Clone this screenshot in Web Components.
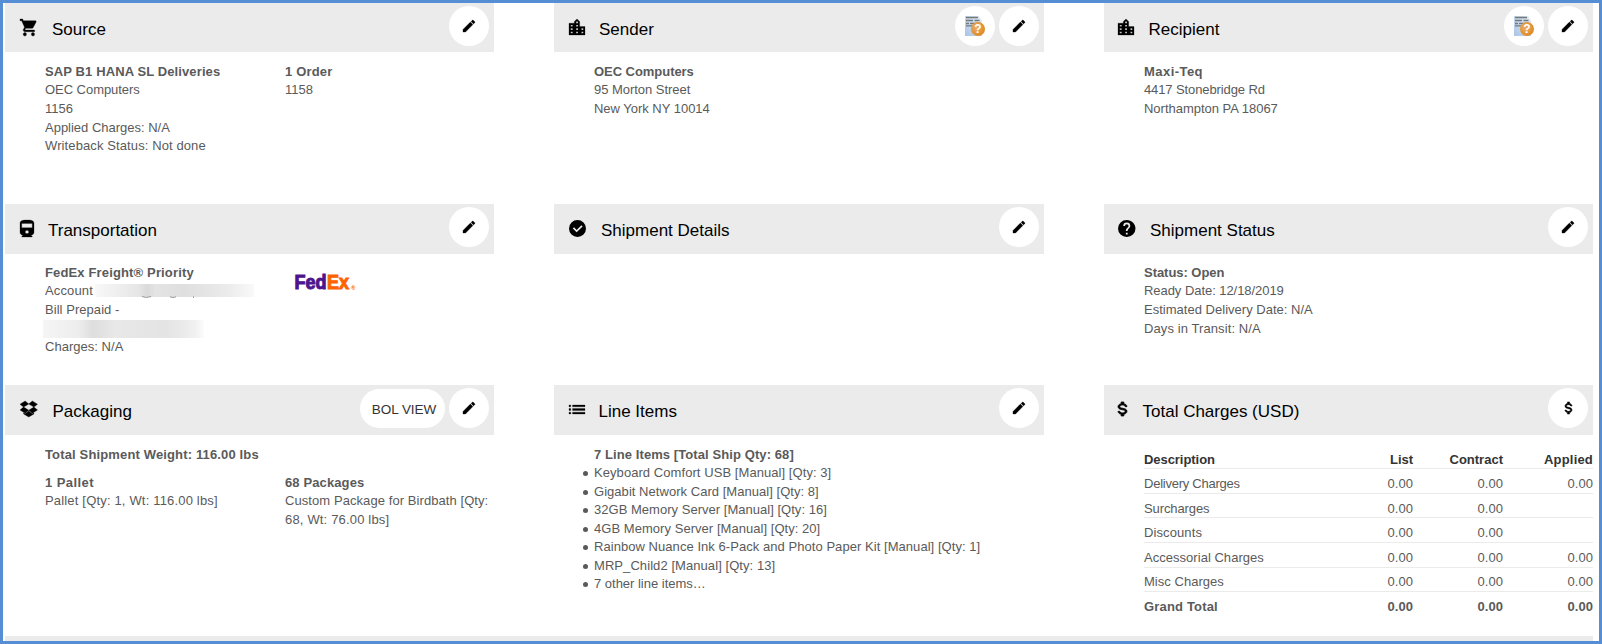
<!DOCTYPE html>
<html lang="en">
<head>
<meta charset="utf-8">
<title>Shipment</title>
<style>
html,body{margin:0;height:100%}
body{font:13px/18.571px "Liberation Sans",Arial,sans-serif;color:#5a5a5a;background:#fff}
</style>
</head>
<body>
<shipment-board>
  <info-card icon="cart" heading="Source" style="--h:49px;--title:47px">
    <round-button slot="actions" icon="pencil"></round-button>
    <two-col>
      <div><text-line bold w="176.5">SAP B1 HANA SL Deliveries</text-line><text-line w="96">OEC Computers</text-line><text-line w="28">1156</text-line><text-line w="126">Applied Charges: N/A</text-line><text-line w="162">Writeback Status: Not done</text-line></div>
      <div><text-line bold w="47.5">1 Order</text-line><text-line w="28">1158</text-line></div>
    </two-col>
  </info-card>
  <info-card icon="city" heading="Sender" style="--h:49px;--title:45px">
    <round-button slot="actions" icon="ask"></round-button>
    <round-button slot="actions" icon="pencil"></round-button>
    <text-line bold w="101">OEC Computers</text-line><text-line w="97.5">95 Morton Street</text-line><text-line w="117">New York NY 10014</text-line>
  </info-card>
  <info-card icon="city" heading="Recipient" style="--h:49px;--title:44.5px;--ix:14px">
    <round-button slot="actions" icon="ask"></round-button>
    <round-button slot="actions" icon="pencil"></round-button>
    <text-line bold w="59">Maxi-Teq</text-line><text-line w="122">4417 Stonebridge Rd</text-line><text-line w="135">Northampton PA 18067</text-line>
  </info-card>

  <info-card icon="train" heading="Transportation" style="--title:43px;--pt:9.9px">
    <round-button slot="actions" icon="pencil"></round-button>
    <two-col>
      <div><text-line bold w="150">FedEx Freight® Priority</text-line><text-line w="48">Account<redacted-bar slot="after" kind="account"></redacted-bar></text-line><text-line w="75">Bill Prepaid -</text-line><redacted-bar kind="payer"></redacted-bar><text-line w="79">Charges: N/A</text-line></div>
      <carrier-logo></carrier-logo>
    </two-col>
  </info-card>
  <info-card icon="check" heading="Shipment Details" style="--title:47px">
    <round-button slot="actions" icon="pencil"></round-button>
  </info-card>
  <info-card icon="help" heading="Shipment Status" style="--title:46px;--ix:14px;--pt:9.9px">
    <round-button slot="actions" icon="pencil"></round-button>
    <text-line bold w="81">Status: Open</text-line><text-line w="141">Ready Date: 12/18/2019</text-line><text-line w="170">Estimated Delivery Date: N/A</text-line><text-line w="118">Days in Transit: N/A</text-line>
  </info-card>

  <info-card icon="box" heading="Packaging" style="--title:47.5px;--pt:10.6px">
    <round-button slot="actions" label="BOL VIEW"></round-button>
    <round-button slot="actions" icon="pencil"></round-button>
    <text-line bold w="215">Total Shipment Weight: 116.00 lbs</text-line>
    <two-col style="margin-top:9.75px">
      <div><text-line bold w="49">1 Pallet</text-line><text-line w="174">Pallet [Qty: 1, Wt: 116.00 lbs]</text-line></div>
      <div><text-line bold w="80">68 Packages</text-line><text-line w="204.500">Custom Package for Birdbath [Qty:</text-line><text-line w="105.5">68, Wt: 76.00 lbs]</text-line></div>
    </two-col>
  </info-card>
  <info-card icon="list" heading="Line Items" style="--title:44.5px;--pt:10.55px">
    <round-button slot="actions" icon="pencil"></round-button>
    <text-line bold w="201">7 Line Items [Total Ship Qty: 68]</text-line>
    <text-line bullet w="238.5">Keyboard Comfort USB [Manual] [Qty: 3]</text-line>
    <text-line bullet w="226">Gigabit Network Card [Manual] [Qty: 8]</text-line>
    <text-line bullet w="234">32GB Memory Server [Manual] [Qty: 16]</text-line>
    <text-line bullet w="227.5">4GB Memory Server [Manual] [Qty: 20]</text-line>
    <text-line bullet w="387.500">Rainbow Nuance Ink 6-Pack and Photo Paper Kit [Manual] [Qty: 1]</text-line>
    <text-line bullet w="182.5">MRP_Child2 [Manual] [Qty: 13]</text-line>
    <text-line bullet w="113">7 other line items…</text-line>
  </info-card>
  <info-card icon="dollar" heading="Total Charges (USD)" style="--title:38.5px;--ix:14px;--pt:9.8px">
    <round-button slot="actions" icon="dollar"></round-button>
    <charge-row head><text-line bold w="71.5">Description</text-line><text-line bold w="23">List</text-line><text-line bold w="53.5">Contract</text-line><text-line bold w="49">Applied</text-line></charge-row>
    <charge-row><text-line w="97">Delivery Charges</text-line><text-line w="25.5">0.00</text-line><text-line w="25.5">0.00</text-line><text-line w="25.5">0.00</text-line></charge-row>
    <charge-row><text-line w="66">Surcharges</text-line><text-line w="25.5">0.00</text-line><text-line w="25.5">0.00</text-line></charge-row>
    <charge-row><text-line w="58">Discounts</text-line><text-line w="25.5">0.00</text-line><text-line w="25.5">0.00</text-line></charge-row>
    <charge-row><text-line w="121">Accessorial Charges</text-line><text-line w="25.5">0.00</text-line><text-line w="25.5">0.00</text-line><text-line w="25.5">0.00</text-line></charge-row>
    <charge-row><text-line w="80.5">Misc Charges</text-line><text-line w="25.5">0.00</text-line><text-line w="25.5">0.00</text-line><text-line w="25.5">0.00</text-line></charge-row>
    <charge-row last><text-line bold w="74.5">Grand Total</text-line><text-line bold w="25.5">0.00</text-line><text-line bold w="25.5">0.00</text-line><text-line bold w="25.5">0.00</text-line></charge-row>
  </info-card>
</shipment-board>

<script>
const svg = (box, w, h, d, bold = 0) => `<svg viewBox="${box}" width="${w}" height="${h}" preserveAspectRatio="none" overflow="visible" fill="currentColor" stroke="currentColor" stroke-width="${bold}"><path fill-rule="evenodd" d="${d}"/></svg>`;
const DOLLAR = "M7,15H9C9,16.08 10.37,17 12,17C13.63,17 15,16.08 15,15C15,13.9 13.96,13.5 11.76,12.97C9.64,12.44 7,11.78 7,9C7,7.21 8.47,5.69 10.5,5.18V3H13.5V5.18C15.53,5.69 17,7.21 17,9H15C15,7.92 13.63,7 12,7C10.37,7 9,7.92 9,9C9,10.1 10.04,10.5 12.24,11.03C14.36,11.56 17,12.22 17,15C17,16.79 15.53,18.31 13.5,18.82V21H10.5V18.82C8.47,18.31 7,16.79 7,15Z";
const ICONS = {
  cart: svg("1 2 21 20", 17, 17, "M17,18A2,2 0 0,1 19,20A2,2 0 0,1 17,22C15.89,22 15,21.1 15,20C15,18.89 15.89,18 17,18M1,2H4.27L5.21,4H20A1,1 0 0,1 21,5C21,5.17 20.95,5.34 20.88,5.5L17.3,11.97C16.96,12.58 16.3,13 15.55,13H8.1L7.2,14.63L7.17,14.75A0.25,0.25 0 0,0 7.42,15H19V17H7C5.89,17 5,16.1 5,15C5,14.65 5.09,14.32 5.24,14.04L6.6,11.59L3,4H1V2M7,18A2,2 0 0,1 9,20A2,2 0 0,1 7,22C5.89,22 5,21.1 5,20C5,18.89 5.89,18 7,18Z", .4),
  city: svg("3 2 18 19", 16, 16, "M19,15H17V13H19M19,19H17V17H19M13,7H11V5H13M13,11H11V9H13M13,15H11V13H13M13,19H11V17H13M7,11H5V9H7M7,15H5V13H7M7,19H5V17H7M15,11V5L12,2L9,5V7H3V21H21V11H15Z", .3),
  train: svg("4 1 16 20", 14, 17, "M4 15.5C4 17.43 5.57 19 7.5 19L6 20.5v.5h12v-.5L16.5 19c1.93 0 3.5-1.57 3.5-3.5V5c0-3.5-3.58-4-8-4s-8 .5-8 4v10.5zm8 1.500c-1.100 0-2-.900-2-2s.900-2 2-2 2 .900 2 2-.900 2-2 2zm6-7H6V5h12v5z", .3),
  check: svg("2 2 20 20", 17, 17, "M12,2A10,10 0 0,1 22,12A10,10 0 0,1 12,22A10,10 0 0,1 2,12A10,10 0 0,1 12,2M11,16.5L18,9.5L16.59,8.09L11,13.67L7.91,10.59L6.5,12L11,16.5Z"),
  help: svg("2 2 20 20", 17.5, 17, "M15.07,11.25L14.17,12.17C13.45,12.89 13,13.5 13,15H11V14.5C11,13.39 11.45,12.39 12.17,11.67L13.41,10.41C13.78,10.05 14,9.55 14,9C14,7.89 13.1,7 12,7A2,2 0 0,0 10,9H8A4,4 0 0,1 12,5A4,4 0 0,1 16,9C16,9.88 15.64,10.67 15.07,11.25M13,19H11V17H13M12,2A10,10 0 0,0 2,12A10,10 0 0,0 12,22A10,10 0 0,0 22,12C22,6.47 17.5,2 12,2Z"),
  box: svg("1.5 2.5 21 19.5", 17.5, 16, "M12,14.56L16.35,18.16L18.2,16.95V18.3L12,22L5.82,18.3V16.95L7.68,18.16L12,14.56M7.68,2.5L12,6.09L16.32,2.5L22.5,6.5L18.23,9.94L22.5,13.36L16.32,17.39L12,13.78L7.68,17.39L1.5,13.36L5.77,9.94L1.5,6.5L7.68,2.5M12,13.68L18.13,9.94L12,6.19L5.87,9.94L12,13.68Z", .4),
  list: svg("3 7 18 10", 16, 9, "M3 13h2v-2H3v2zm0 4h2v-2H3v2zm0-8h2V7H3v2zm4 4h14v-2H7v2zm0 4h14v-2H7v2zM7 7v2h14V7H7z", .3),
  dollar: svg("7 3 10 18", 9, 14, DOLLAR, .9),
  pencil: svg("3 3 18 18", 12, 12, "M20.71,7.04C21.1,6.65 21.1,6 20.71,5.63L18.37,3.29C18,2.9 17.35,2.9 16.96,3.29L15.12,5.12L18.87,8.87M3,17.25V21H6.75L17.81,9.93L14.06,6.18L3,17.25Z", .5),
  dollarSmall: svg("7 3 10 18", 7, 12, DOLLAR, .8),
  ask: `<svg width="20" height="20" viewBox="0 0 20 20"><defs><linearGradient id="p" x1="1" y1="0" x2="0" y2="1"><stop offset="0" stop-color="#e6edf5"/><stop offset="1" stop-color="#a9c4e6"/></linearGradient><radialGradient id="o" cx=".4" cy=".4" r=".6"><stop offset="0" stop-color="#eeb068"/><stop offset="1" stop-color="#df8a26"/></radialGradient></defs><path fill="url(#p)" d="M0 0h14l3 5v15H0z"/><g stroke="#74797a" stroke-width="1.3"><path d="M1 1.500h12M1 4.500h7M9.500 4.500h5M1 7.500h3M5 7.500h10M1 9.800h6"/></g><circle cx="13" cy="13" r="7" fill="url(#o)"/><text x="13" y="17.300" text-anchor="middle" font-family="Liberation Sans" font-weight="700" font-size="12" fill="#fff">?</text></svg>`
};
const define = (name, html, init) => customElements.define(name, class extends HTMLElement {
  connectedCallback() {
    if (this.shadowRoot) return;
    this.attachShadow({mode: "open"}).innerHTML = typeof html === "function" ? html(this) : html;
    if (init) init(this);
  }
});

define("shipment-board", `<style>
:host{display:flex;flex-direction:column;box-sizing:border-box;width:1602px;height:644px;border:3px solid #558ed5;padding-left:2px;overflow:hidden}
.grid{display:grid;grid-template-columns:489px 490px 489px;grid-template-rows:201px 181px 251px;column-gap:60px}
.next{width:1588px;height:5px;background:#ebebeb}
</style><div class="grid"><slot></slot></div><div class="next"></div>`);

define("info-card", el => `<style>
:host{display:block;min-width:0}
header{display:flex;height:var(--h,50px);background:#ebebeb;color:#000}
.icon{display:flex;align-items:center;box-sizing:border-box;height:48px;width:var(--title);padding-left:var(--ix,15px)}
h2{margin:0;font-size:17px;font-weight:400;line-height:20px;padding-top:17px;flex:1;white-space:nowrap}
.actions{display:flex;gap:4px;padding:3px 5px 0 0}
.body{padding:var(--pt,10.9px) 0 0 40px}
</style><header><span class="icon">${ICONS[el.getAttribute("icon")]}</span><h2>${el.getAttribute("heading")}</h2><div class="actions"><slot name="actions"></slot></div></header><div class="body"><slot></slot></div>`);

define("round-button", el => {
  const label = el.getAttribute("label"), icon = el.getAttribute("icon");
  return `<style>
:host{display:block}
button{display:flex;align-items:center;justify-content:center;box-sizing:border-box;width:40px;height:40px;border:0;border-radius:20px;padding:0;background:#fff;color:#000;font:13.5px "Liberation Sans",Arial,sans-serif}
button.label{width:85px;height:39px;margin-top:1px;padding:2px 0 0 3px;color:#333;letter-spacing:-.05px}
</style><button class="${label ? "label" : ""}">${label || ICONS[icon === "dollar" ? "dollarSmall" : icon]}</button>`;
});

define("two-col", `<style>:host{display:grid;grid-template-columns:240px 209px}</style><slot></slot>`);

define("charge-row", `<style>
:host{display:grid;grid-template-columns:179px 90px 90px 90px;box-sizing:border-box;height:24.571px;padding-top:5.6px;border-bottom:1px solid #ebebeb}
:host([head]){color:#333;padding-top:5.9px}
:host([last]){border-bottom:0}
::slotted(:not(:first-child)){justify-self:end}
</style><slot></slot>`);

define("redacted-bar", `<style>
:host{display:block}
:host([kind=payer]){width:161px;height:18.571px;margin-left:-2px;background:linear-gradient(90deg,#f5f5f5,#ededed 22%,#dedede 31%,#e8e8e8 45%,#e6e6e6 60%,#e4e4e4 76%,#ebebeb 88%,#f2f2f2 95%,#fcfcfc)}
:host([kind=account]){width:159px;height:13px;margin:2px 0 0 2px;background:linear-gradient(90deg,#f8f8f8,#f0f0f0 12%,#e6e6e6 27%,#dadada 33%,#e4e4e4 38%,#dfdfdf 55%,#e4e4e4 68%,#ebebeb 83%,#f9f9f9)}
svg{display:none}
:host([kind=account]) svg{display:block}
</style><svg width="159" height="15" fill="none" stroke="#999"><path d="M47 12.500q4 2 9 0M75 12.800q3 1.500 6 0M98.500 12.500v1.500"/></svg>`);

define("carrier-logo", `<style>:host{display:block;padding:3px 0 0 5px}svg{display:block}</style>
<svg width="80" height="32" font-family="Liberation Sans,Arial,sans-serif" font-weight="700" font-size="21"><text x="4.500" y="22" textLength="32" lengthAdjust="spacingAndGlyphs" fill="#4d148c" stroke="#4d148c" stroke-width="1.100">Fed</text><text x="37" y="22" textLength="22" lengthAdjust="spacingAndGlyphs" fill="#ff6200" stroke="#ff6200" stroke-width="1.100">Ex</text><text x="61" y="22.500" font-size="6" fill="#ff6200">®</text></svg>`);

/* One line of text, tracked so that it fills the width given by "w". */
define("text-line", `<style>
:host{display:flex;height:18.571px;white-space:nowrap}
:host([bold]){font-weight:700}
:host([bullet])::before{content:"";width:5px;height:5px;border-radius:50%;background:#5a5a5a;margin:7px 6.5px 0 -11.5px}
</style><span><slot></slot></span><slot name="after"></slot>`, el => {
  const span = el.shadowRoot.querySelector("span");
  const n = [...el.childNodes].filter(c => c.nodeType === 3).map(c => c.data).join("").length;
  const w = +el.getAttribute("w");
  const gap = (w - (w > 90 ? 1.2 : w > 60 ? .6 : 0) - span.getBoundingClientRect().width) / n;
  span.style.letterSpacing = gap.toFixed(3) + "px";
});
</script>
</body>
</html>
